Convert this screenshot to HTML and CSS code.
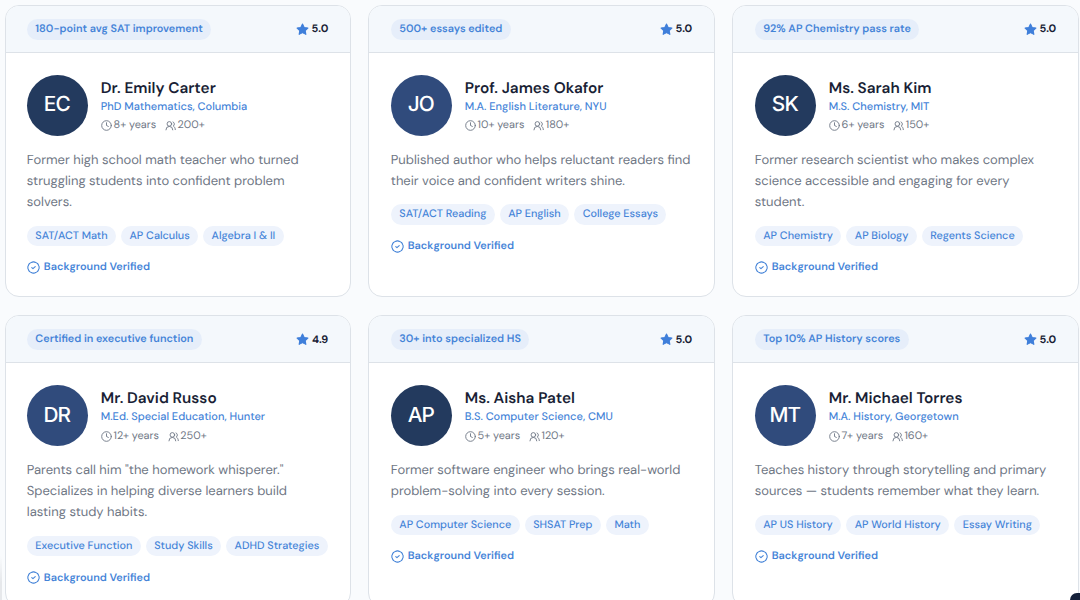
FILE: index.html
```html
<!DOCTYPE html>
<html lang="en">
<head>
<meta charset="utf-8">
<title>Tutors</title>
<link rel="stylesheet" href="styles.css">
</head>
<body>
<svg class="sprite" aria-hidden="true">
  <symbol id="star" viewBox="0 0 24 24"><path d="M12 2l3.100 6.300 6.900 1-5 4.900 1.200 6.800-6.200-3.200L5.800 21 7 14.200l-5-4.900 6.900-1z" fill="currentColor" stroke="currentColor" stroke-width="2" stroke-linejoin="round"/></symbol>
  <symbol id="clock" viewBox="0 0 24 24"><g fill="none" stroke="currentColor" stroke-width="2" stroke-linecap="round" stroke-linejoin="round"><circle cx="12" cy="12" r="10.500"/><path d="M12 6v6l4 2"/></g></symbol>
  <symbol id="users" viewBox="0 0 24 24"><g fill="none" stroke="currentColor" stroke-width="2" stroke-linecap="round" stroke-linejoin="round"><path d="M17 21.500a7.500 7.500 0 0 0-15 0"/><circle cx="9.500" cy="8.500" r="5"/><path d="M22.500 21c0-3.370-2-6.500-4.500-8a5 5 0 0 0-.450-8.800"/></g></symbol>
  <symbol id="check" viewBox="0 0 24 24"><g fill="none" stroke="currentColor" stroke-width="2" stroke-linecap="round" stroke-linejoin="round"><path d="M12 1.600Q14.200 1.500 15.800 2.800Q18 3.100 19.300 4.700Q21 6 21.300 8.200Q22.700 9.800 22.400 12Q22.700 14.200 21.300 15.800Q21 18 19.300 19.300Q18 21 15.800 21.200Q14.200 22.600 12 22.400Q9.800 22.600 8.200 21.200Q6 21 4.700 19.300Q3 18 2.700 15.800Q1.300 14.200 1.600 12Q1.300 9.800 2.700 8.200Q3 6 4.700 4.700Q6 3.100 8.200 2.800Q9.800 1.500 12 1.600z"/><path d="M8.800 12.200l2.200 2 4.200-4"/></g></symbol>
</svg>
<main class="grid">
  <article class="card">
    <header class="card-head"><span class="badge">180-point avg SAT improvement</span><span class="rating"><svg><use href="#star"/></svg>5.0</span></header>
    <div class="body">
      <div class="profile"><div class="avatar navy">EC</div><div class="info"><h3>Dr. Emily Carter</h3><p class="degree">PhD Mathematics, Columbia</p><p class="meta"><span><svg><use href="#clock"/></svg>8+ years</span><span><svg><use href="#users"/></svg>200+</span></p></div></div>
      <p class="bio">Former high school math teacher who turned<br>struggling students into confident problem<br>solvers.</p>
      <div class="tags"><span>SAT/ACT Math</span><span>AP Calculus</span><span>Algebra I &amp; II</span></div>
      <p class="verified"><svg><use href="#check"/></svg>Background Verified</p>
    </div>
  </article>
  <article class="card">
    <header class="card-head"><span class="badge">500+ essays edited</span><span class="rating"><svg><use href="#star"/></svg>5.0</span></header>
    <div class="body">
      <div class="profile"><div class="avatar blue">JO</div><div class="info"><h3>Prof. James Okafor</h3><p class="degree">M.A. English Literature, NYU</p><p class="meta"><span><svg><use href="#clock"/></svg>10+ years</span><span><svg><use href="#users"/></svg>180+</span></p></div></div>
      <p class="bio">Published author who helps reluctant readers find<br>their voice and confident writers shine.</p>
      <div class="tags"><span>SAT/ACT Reading</span><span>AP English</span><span>College Essays</span></div>
      <p class="verified"><svg><use href="#check"/></svg>Background Verified</p>
    </div>
  </article>
  <article class="card">
    <header class="card-head"><span class="badge">92% AP Chemistry pass rate</span><span class="rating"><svg><use href="#star"/></svg>5.0</span></header>
    <div class="body">
      <div class="profile"><div class="avatar navy">SK</div><div class="info"><h3>Ms. Sarah Kim</h3><p class="degree">M.S. Chemistry, MIT</p><p class="meta"><span><svg><use href="#clock"/></svg>6+ years</span><span><svg><use href="#users"/></svg>150+</span></p></div></div>
      <p class="bio">Former research scientist who makes complex<br>science accessible and engaging for every<br>student.</p>
      <div class="tags"><span>AP Chemistry</span><span>AP Biology</span><span>Regents Science</span></div>
      <p class="verified"><svg><use href="#check"/></svg>Background Verified</p>
    </div>
  </article>
  <article class="card">
    <header class="card-head"><span class="badge">Certified in executive function</span><span class="rating"><svg><use href="#star"/></svg>4.9</span></header>
    <div class="body">
      <div class="profile"><div class="avatar blue">DR</div><div class="info"><h3>Mr. David Russo</h3><p class="degree">M.Ed. Special Education, Hunter</p><p class="meta"><span><svg><use href="#clock"/></svg>12+ years</span><span><svg><use href="#users"/></svg>250+</span></p></div></div>
      <p class="bio">Parents call him "the homework whisperer."<br>Specializes in helping diverse learners build<br>lasting study habits.</p>
      <div class="tags"><span>Executive Function</span><span>Study Skills</span><span>ADHD Strategies</span></div>
      <p class="verified"><svg><use href="#check"/></svg>Background Verified</p>
    </div>
  </article>
  <article class="card">
    <header class="card-head"><span class="badge">30+ into specialized HS</span><span class="rating"><svg><use href="#star"/></svg>5.0</span></header>
    <div class="body">
      <div class="profile"><div class="avatar navy">AP</div><div class="info"><h3>Ms. Aisha Patel</h3><p class="degree">B.S. Computer Science, CMU</p><p class="meta"><span><svg><use href="#clock"/></svg>5+ years</span><span><svg><use href="#users"/></svg>120+</span></p></div></div>
      <p class="bio">Former software engineer who brings real-world<br>problem-solving into every session.</p>
      <div class="tags"><span>AP Computer Science</span><span>SHSAT Prep</span><span>Math</span></div>
      <p class="verified"><svg><use href="#check"/></svg>Background Verified</p>
    </div>
  </article>
  <article class="card">
    <header class="card-head"><span class="badge">Top 10% AP History scores</span><span class="rating"><svg><use href="#star"/></svg>5.0</span></header>
    <div class="body">
      <div class="profile"><div class="avatar blue">MT</div><div class="info"><h3>Mr. Michael Torres</h3><p class="degree">M.A. History, Georgetown</p><p class="meta"><span><svg><use href="#clock"/></svg>7+ years</span><span><svg><use href="#users"/></svg>160+</span></p></div></div>
      <p class="bio">Teaches history through storytelling and primary<br>sources — students remember what they learn.</p>
      <div class="tags"><span>AP US History</span><span>AP World History</span><span>Essay Writing</span></div>
      <p class="verified"><svg><use href="#check"/></svg>Background Verified</p>
    </div>
  </article>
</main>
<div class="edge-shadow"></div>
<div class="fab"></div>
</body>
</html>
```

FILE: styles.css
```css
* { box-sizing: border-box; margin: 0; }
html { height: 600px; overflow: hidden; }
body {
  position: relative; width: 1080px; height: 600px; overflow: hidden;
  background: #f9fbfd; color: #1a1f36;
  font-family: "DM Sans", Inter, sans-serif;
  text-rendering: geometricPrecision;
}
svg { flex: none; display: block; }
.sprite { display: none; }
.grid {
  display: grid; grid-template-columns: repeat(3, 346.400px);
  grid-auto-rows: 292.300px; gap: 18px 17.600px; height: 600px; overflow: hidden;
  padding: 4.700px 0 0 4.500px;
}
.card { background: #fff; border: 1px solid #dde2e8; border-radius: 14px; overflow: hidden; }
.card-head {
  display: flex; justify-content: space-between; align-items: center;
  height: 47.300px; padding: 1px 21.600px 0 21.300px;
  background: #f4f8fc; border-bottom: 1px solid #dde2e8;
}
.badge, .tags span {
  display: block; height: 20.500px; line-height: 21px; padding: 0 8.500px;
  border-radius: 11px; font-size: 10.850px; color: #4584d8; white-space: nowrap;
}
.badge { background: #e6eefa; font-weight: 600; }
.rating { display: flex; align-items: center; gap: 2.500px; font-size: 10.900px; line-height: 20px; font-weight: 700; }
.rating svg { width: 13px; height: 13px; color: #3f7fda; }
.body { padding: 22px 21.300px; }
.profile { display: flex; align-items: center; gap: 13px; height: 61px; }
.avatar {
  width: 61px; height: 61px; border-radius: 50%; flex: none;
  display: flex; align-items: center; justify-content: center;
  color: #fff; font: 500 20.800px/26px Inter, sans-serif; letter-spacing: -0.900px;
  padding-right: 0.900px;
}
.navy { background: #233a5e; }
.blue { background: #304b7c; }
.info { white-space: nowrap; padding-top: 2.400px; }
h3 { font-size: 15.350px; line-height: 20px; font-weight: 600; }
.degree { font-size: 11.050px; line-height: 18.500px; font-weight: 550; color: #4584d8; }
.meta { display: flex; gap: 8.500px; font-size: 10.900px; line-height: 19px; color: #6f7785; }
.meta span { display: flex; align-items: center; gap: 1.800px; }
.meta svg { width: 11px; height: 11px; }
.bio { margin-top: 13.700px; font-size: 13px; line-height: 21.100px; color: #6f7785; white-space: nowrap; }
.tags { display: flex; gap: 4.900px; margin-top: 12.600px; }
.tags span { background: #eef3fc; font-weight: 500; }
.verified { display: flex; align-items: center; gap: 4px; margin-top: 13.200px; font-size: 10.900px; line-height: 16.500px; font-weight: 600; color: #4584d8; }
.verified svg { width: 13px; height: 13px; }
.fab { position: absolute; left: 1070px; top: 593px; width: 10px; height: 7px; border-radius: 8px 0 0 0; background: #142039; }
.edge-shadow { position: absolute; left: 0; top: 556px; width: 1.500px; height: 44px; background: linear-gradient(#e9ebee00, #e6e8eb 60%); }
```
